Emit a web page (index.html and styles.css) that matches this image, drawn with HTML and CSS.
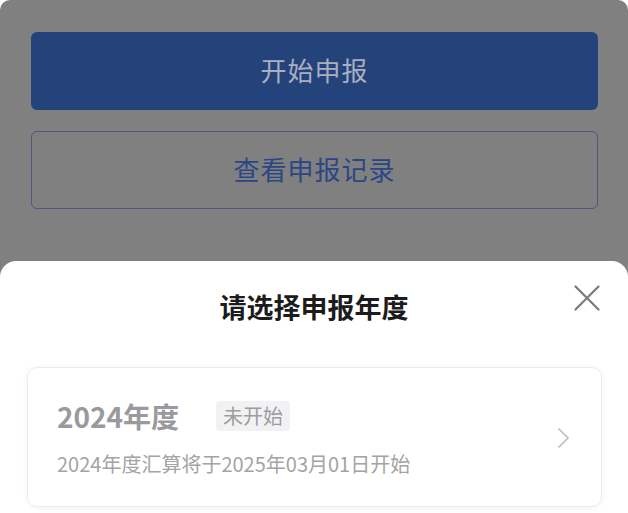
FILE: index.html
```html
<!DOCTYPE html>
<html lang="zh-CN">
<head>
    <meta charset="UTF-8">
    <meta name="viewport" content="width=device-width, initial-scale=1.0">
    <title>个税申报</title>
    <link rel="stylesheet" href="styles.css">
</head>
<body>
    <div class="screen">
        <div class="page">
            <button class="btn primary">开始申报</button>
            <button class="btn outline">查看申报记录</button>
        </div>

        <div class="sheet">
            <div class="sheet-header">
                <div class="sheet-title">请选择申报年度</div>
                <button class="close" aria-label="关闭">
                    <svg width="26" height="26" viewBox="0 0 26 26">
                        <path d="M1.5 1.5 L24.5 24.5 M24.5 1.5 L1.5 24.5" stroke="#7a7a7a" stroke-width="2.2" stroke-linecap="round" fill="none"/>
                    </svg>
                </button>
            </div>

            <div class="year-card">
                <div class="year-info">
                    <div class="year-row">
                        <span class="year">2024年度</span>
                        <span class="tag">未开始</span>
                    </div>
                    <div class="year-desc">2024年度汇算将于2025年03月01日开始</div>
                </div>
                <svg class="chevron" width="13" height="22" viewBox="0 0 13 22">
                    <path d="M1.5 1.5 L11 11 L1.5 20.5" stroke="#bdbdbd" stroke-width="1.6" fill="none"/>
                </svg>
            </div>
        </div>
    </div>
</body>
</html>
```

FILE: styles.css
```css
body {
    margin: 0;
    padding: 0;
    background-color: #ffffff;
    font-family: "Noto Sans CJK SC", "Noto Sans", sans-serif;
}
.screen {
    width: 628px;
    height: 513px;
    background-color: #808080;
    border-radius: 10px 10px 0 0;
    overflow: hidden;
    display: flex;
    flex-direction: column;
}
.page {
    display: flex;
    flex-direction: column;
    gap: 21px;
    padding: 32px 30px 0 31px;
}
.btn {
    height: 78px;
    padding: 0 0 4px;
    border-radius: 6px;
    font-family: inherit;
    font-size: 26px;
    letter-spacing: 1px;
    cursor: pointer;
}
.btn.primary {
    background-color: #24437b;
    border: none;
    color: #a9afbf;
}
.btn.outline {
    background-color: transparent;
    border: 1px solid #4f5680;
    color: #2b4685;
}
.sheet {
    margin-top: 52px;
    flex: 1;
    background-color: #ffffff;
    border-radius: 16px 16px 0 0;
}
.sheet-header {
    display: flex;
    justify-content: center;
    align-items: center;
    padding-top: 27px;
    height: 38px;
    position: relative;
}
.sheet-title {
    font-size: 27px;
    font-weight: bold;
    color: #1c1c1c;
    line-height: 38px;
}
.close {
    position: absolute;
    right: 28px;
    top: 24px;
    background: none;
    border: none;
    padding: 0;
    cursor: pointer;
}
.year-card {
    margin: 41px 26px 0 27px;
    height: 138px;
    border: 1px solid #ececec;
    border-radius: 10px;
    box-shadow: 0 1px 6px rgba(0, 0, 0, 0.05);
    display: flex;
    align-items: center;
    justify-content: space-between;
    padding: 0 31px 0 29px;
}
.year-info {
    display: flex;
    flex-direction: column;
    gap: 17px;
}
.year-row {
    display: flex;
    align-items: center;
    gap: 37px;
}
.year {
    font-size: 28px;
    font-weight: bold;
    color: #989a9d;
    line-height: 36px;
}
.tag {
    background-color: #f2f2f4;
    color: #9d9d9d;
    font-size: 20px;
    line-height: 30px;
    padding: 0 7px;
    border-radius: 4px;
}
.year-desc {
    font-size: 20px;
    color: #a4a4a4;
    line-height: 26px;
}
.chevron {
    margin-top: 2px;
}
```
